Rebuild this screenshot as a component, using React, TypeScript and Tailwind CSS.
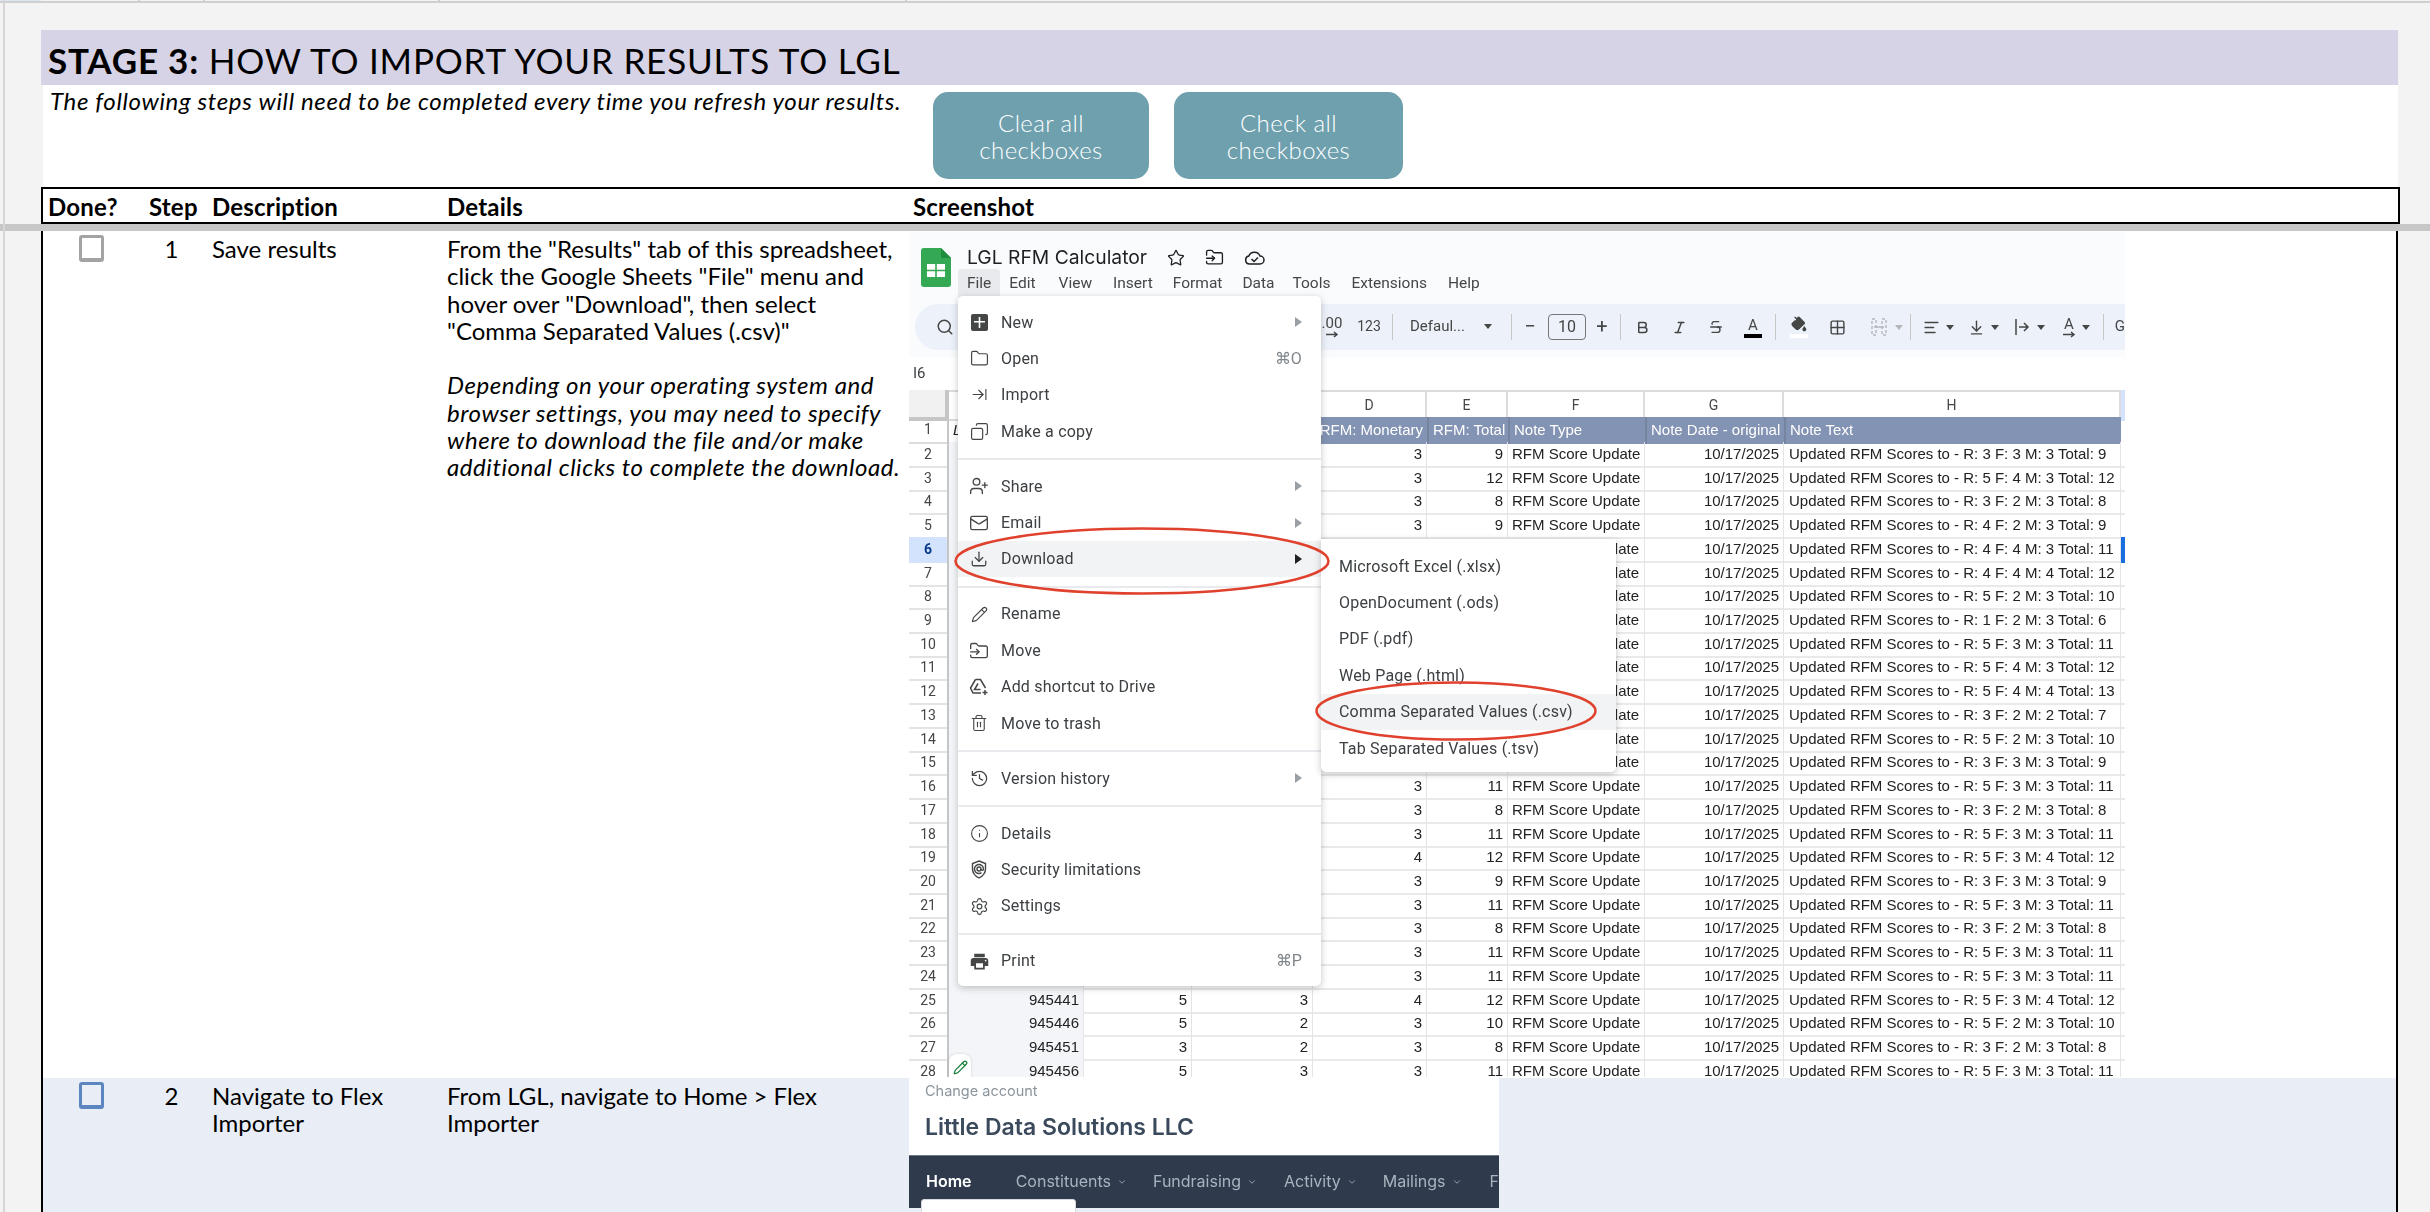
import {
  AlignLeft,
  ArrowDownToLine,
  ArrowRightToLine,
  Bold,
  ChevronDown,
  Copy,
  Download,
  FolderInput,
  Folder,
  Grid2x2,
  History,
  Info,
  Italic,
  Mail,
  PaintBucket,
  Pencil,
  Search,
  Settings,
  Star,
  Strikethrough,
  Trash2,
  UserPlus,
} from 'lucide-react';
import type { ReactNode } from 'react';

const sheetCols = 'grid grid-cols-[40px_135px_108px_121px_114px_81px_137px_139px_337px_4px]';

// R, F, M, Total for rows 2 to 28
const scores = [
  [3, 3, 3, 9], [5, 4, 3, 12], [3, 2, 3, 8], [4, 2, 3, 9], [4, 4, 3, 11], [4, 4, 4, 12],
  [5, 2, 3, 10], [1, 2, 3, 6], [5, 3, 3, 11], [5, 4, 3, 12], [5, 4, 4, 13], [3, 2, 2, 7],
  [5, 2, 3, 10], [3, 3, 3, 9], [5, 3, 3, 11], [3, 2, 3, 8], [5, 3, 3, 11], [5, 3, 4, 12],
  [3, 3, 3, 9], [5, 3, 3, 11], [3, 2, 3, 8], [5, 3, 3, 11], [5, 3, 3, 11], [5, 3, 4, 12],
  [5, 2, 3, 10], [3, 2, 3, 8], [5, 3, 3, 11],
];
const ids: Record<number, string> = { 25: '945441', 26: '945446', 27: '945451', 28: '945456' };

function Caret() {
  return <span className="w-0 h-0 border-x-[4px] border-x-transparent border-t-[5px] border-t-[#444746]" />;
}

function Sep({ className }: { className: string }) {
  return (
    <span className={`flex justify-center ${className}`}>
      <span className="w-[1px] h-[26px] bg-[#c7c7c7]" />
    </span>
  );
}

function SmallArrow() {
  return (
    <svg width="14" height="7" viewBox="0 0 14 7" fill="none" stroke="currentColor" strokeWidth="1.5">
      <path d="M1 3.5h11M9 1l3 2.500L9 6" />
    </svg>
  );
}

function Toolbar() {
  return (
    <div className="ml-[6px] h-[46px] w-[1210px] rounded-l-[23px] bg-[#edf2fa] flex items-center overflow-hidden text-[#444746] [font-family:Roboto,sans-serif]">
      <Search size={18} className="ml-[21px] mr-[362px]" />
      <span className="w-[32px] flex flex-col items-center text-[15px] leading-[15px]">.00<SmallArrow /></span>
      <span className="w-[42px] text-center text-[14px]">123</span>
      <Sep className="w-[6px]" />
      <span className="w-[110px] pl-[14px] flex items-center gap-[19px] text-[15px]">Defaul...<Caret /></span>
      <Sep className="w-[12px]" />
      <span className="w-[24px] text-center text-[20px]">−</span>
      <span className="w-[50px] flex justify-center">
        <span className="w-[38px] h-[26px] border border-[#747775] rounded-[4px] text-center text-[16px] leading-[24px]">10</span>
      </span>
      <span className="w-[20px] text-center text-[20px]">+</span>
      <Sep className="w-[18px]" />
      <span className="w-[26px] flex justify-center"><Bold size={15} strokeWidth={2.4} /></span>
      <span className="w-[48px] flex justify-center"><Italic size={15} strokeWidth={2.4} /></span>
      <span className="w-[24px] flex justify-center"><Strikethrough size={16} /></span>
      <span className="ml-[6px] w-[38px] flex flex-col items-center text-[15px] leading-[17px]">A<span className="w-[18px] h-[4px] bg-black" /></span>
      <Sep className="w-[8px]" />
      <span className="w-[38px] flex flex-col items-center"><PaintBucket size={16} fill="#444746" /><span className="mt-[2px] w-[18px] h-[4px] bg-white" /></span>
      <span className="w-[40px] flex justify-center"><Grid2x2 size={17} /></span>
      <span className="w-[48px] flex items-center justify-end gap-[7px] pr-[3px] text-[#b4b7ba]">
        <svg width="18" height="18" viewBox="0 0 18 18" fill="none" stroke="currentColor" strokeWidth="1.4" strokeDasharray="3 2">
          <path d="M2 1h4v16H2zM12 1h4v16h-4z" />
          <path d="M4 9h10" strokeDasharray="none" />
        </svg>
        <span className="w-0 h-0 border-x-[4px] border-x-transparent border-t-[5px] border-t-[#b4b7ba]" />
      </span>
      <Sep className="w-[10px]" />
      <span className="w-[45px] flex items-center justify-center gap-[6px]"><AlignLeft size={17} /><Caret /></span>
      <span className="w-[46px] flex items-center justify-center gap-[6px]"><ArrowDownToLine size={17} /><Caret /></span>
      <span className="w-[46px] flex items-center justify-center gap-[6px]">
        <svg width="17" height="18" viewBox="0 0 17 18" fill="none" stroke="currentColor" strokeWidth="1.5">
          <path d="M2 1v16M5 9h9M10 5l4 4-4 4" />
        </svg>
        <Caret />
      </span>
      <span className="w-[46px] flex items-center justify-center gap-[6px]">
        <span className="flex flex-col items-center text-[15px] leading-[14px]">A<SmallArrow /></span>
        <Caret />
      </span>
      <Sep className="w-[10px]" />
      <span className="ml-[6px] text-[15px]">G</span>
    </div>
  );
}

function SheetsLogo() {
  return (
    <svg width="30" height="39" viewBox="0 0 30 39">
      <path d="M3 0h17l10 10v26a3 3 0 0 1-3 3H3a3 3 0 0 1-3-3V3a3 3 0 0 1 3-3z" fill="#34a853" />
      <path d="M20 0l10 10H20z" fill="#1e8e3e" />
      <path d="M6 16h18v13H6z" fill="#fff" />
      <path d="M14.2 16h1.6v13h-1.6zM6 21.7h18v1.6H6z" fill="#34a853" />
    </svg>
  );
}

function SheetGrid() {
  return (
    <div className="[font-family:'Liberation_Sans',sans-serif] text-[15px] text-[#222]">
      <div className={`${sheetCols} h-[27px] text-[14px] text-[#444746] [font-family:Roboto,sans-serif]`}>
        <span className="bg-[#f1f1f1] border-r-4 border-b-4 border-[#c4c7c5]" />
        {['', '', '', 'D', 'E', 'F', 'G', 'H'].map((c, i) => (
          <span key={i} className="flex items-center justify-center border-t-2 border-b-2 border-r-2 border-[#dcdcdc]">{c}</span>
        ))}
        <span className="bg-[#d3e3fd]" />
      </div>
      <div className={`${sheetCols} h-[25px] leading-[25px]`}>
        <span className="border-r-2 border-[#c4c7c5] border-b-2 border-b-[#dcdcdc] text-center text-[14px] text-[#444746] [font-family:Roboto,sans-serif]">1</span>
        <span className="pl-[4px] italic border-b-2 border-[#8393b3]">L</span>
        <span className="bg-[#8393b3]" />
        <span className="bg-[#8393b3]" />
        <span className="bg-[#8393b3] text-white text-right pr-[4px] whitespace-nowrap overflow-hidden">RFM: Monetary</span>
        <span className="bg-[#8393b3] text-white pl-[4px] whitespace-nowrap border-l-2 border-[#75859f]">RFM: Total</span>
        <span className="bg-[#8393b3] text-white pl-[4px] whitespace-nowrap border-l-2 border-[#75859f]">Note Type</span>
        <span className="bg-[#8393b3] text-white pl-[4px] whitespace-nowrap border-l-2 border-[#75859f]">Note Date - original</span>
        <span className="bg-[#8393b3] text-white pl-[4px] whitespace-nowrap border-l-2 border-[#75859f]">Note Text</span>
        <span />
      </div>
      {scores.map(([r, f, m, t], i) => {
        const row = i + 2;
        const line = 'border-b-2 border-[#e9e9e9] border-r border-r-[#e4e4e4]';
        const num = `${line} text-right pr-[4px]`;
        // the two menus lie over these cells, so only what shows past them is written
        const underMenu = row < 25;
        const underSubmenu = row >= 6 && row <= 15;
        return (
          <div key={row} className={`${sheetCols} h-[23.73px] leading-[24px]`}>
            <span
              className={
                row === 6
                  ? 'bg-[#d3e3fd] text-center text-[14px] font-bold text-[#0b3a8a] border-r-2 border-[#c4c7c5] [font-family:Roboto,sans-serif]'
                  : 'text-center text-[14px] text-[#444746] border-b-2 border-[#e4e4e4] border-r-2 border-r-[#c4c7c5] [font-family:Roboto,sans-serif]'
              }
            >
              {row}
            </span>
            <span className={`${num} bg-[#f3f5f8]`}>{ids[row]}</span>
            <span className={num}>{!underMenu && r}</span>
            <span className={num}>{!underMenu && f}</span>
            <span className={num}>{!underSubmenu && m}</span>
            <span className={num}>{!underSubmenu && t}</span>
            {underSubmenu ? (
              <span className={`${line} text-right pr-[5px]`}>date</span>
            ) : (
              <span className={`${line} pl-[4px] whitespace-nowrap`}>RFM Score Update</span>
            )}
            <span className={num}>10/17/2025</span>
            <span className={`${line} pl-[5px] whitespace-nowrap`}>{`Updated RFM Scores to - R: ${r} F: ${f} M: ${m} Total: ${t}`}</span>
            <span className={row === 6 ? 'border-2 border-[#1a6fe0]' : 'border-b-2 border-[#e9e9e9]'} />
          </div>
        );
      })}
    </div>
  );
}

function MenuItem({ icon, label, right, arrow, hover }: { icon?: ReactNode; label: string; right?: string; arrow?: 'dim' | 'dark'; hover?: boolean }) {
  return (
    <div className={`h-[36.4px] flex items-center pr-[19px] text-[16px] tracking-[0.2px] text-[#3c4043] ${hover ? 'bg-[#f1f3f4]' : ''}`}>
      <span className="w-[43px] pr-[1px] flex justify-center text-[#444746]">{icon}</span>
      <span className="flex-1 whitespace-nowrap">{label}</span>
      {right && <span className="text-[#80868b]">{right}</span>}
      {arrow && (
        <span className={`w-0 h-0 border-y-[5px] border-y-transparent border-l-[7px] ${arrow === 'dark' ? 'border-l-[#202124]' : 'border-l-[#9aa0a6]'}`} />
      )}
    </div>
  );
}

function MenuLine() {
  return (
    <div className="h-[18.6px] flex items-center">
      <span className="h-[2px] w-full bg-[#e8eaed]" />
    </div>
  );
}

function FileMenu() {
  return (
    <div className="absolute left-[49px] top-[64px] w-[363px] h-[690px] pt-[8px] bg-white rounded-[5px] shadow-[0_2px_7px_rgba(60,64,67,0.3)] [font-family:Roboto,sans-serif]">
      <MenuItem
        label="New"
        arrow="dim"
        icon={
          <svg width="17" height="17" viewBox="0 0 17 17">
            <rect width="17" height="17" rx="2" fill="#444746" />
            <path d="M7.7 3h1.6v11H7.7zM3 7h11v1.6H3z" fill="#fff" />
          </svg>
        }
      />
      <MenuItem label="Open" right="⌘O" icon={<Folder size={19} strokeWidth={1.5} />} />
      <MenuItem label="Import" icon={<ArrowRightToLine size={17} strokeWidth={1.6} />} />
      <MenuItem label="Make a copy" icon={<Copy size={19} strokeWidth={1.5} className="-scale-x-100" />} />
      <MenuLine />
      <MenuItem label="Share" arrow="dim" icon={<UserPlus size={20} strokeWidth={1.6} />} />
      <MenuItem label="Email" arrow="dim" icon={<Mail size={20} strokeWidth={1.6} />} />
      <MenuItem label="Download" arrow="dark" hover icon={<Download size={18} strokeWidth={1.7} />} />
      <MenuLine />
      <MenuItem label="Rename" icon={<Pencil size={17} strokeWidth={1.6} />} />
      <MenuItem label="Move" icon={<FolderInput size={20} strokeWidth={1.6} />} />
      <MenuItem
        label="Add shortcut to Drive"
        icon={
          <svg width="20" height="18" viewBox="0 0 20 18" fill="none" stroke="currentColor" strokeWidth="1.5">
            <path d="M6.5 1.5h5l5 8.5M6.5 1.5L1.5 10l2.5 5h8" />
            <path d="M9 5.5L5.5 11.5h6" />
            <path d="M16 12v5M13.5 14.5h5" />
          </svg>
        }
      />
      <MenuItem label="Move to trash" icon={<Trash2 size={18} strokeWidth={1.5} />} />
      <MenuLine />
      <MenuItem label="Version history" arrow="dim" icon={<History size={19} strokeWidth={1.6} />} />
      <MenuLine />
      <MenuItem label="Details" icon={<Info size={19} strokeWidth={1.4} />} />
      <MenuItem
        label="Security limitations"
        icon={
          <svg width="16" height="19" viewBox="0 0 16 19" fill="none" stroke="currentColor" strokeWidth="1.4">
            <path d="M8 1l6.5 2.5v5.5c0 4-2.6 7-6.5 9-3.9-2-6.5-5-6.5-9V3.500z" />
            <circle cx="8" cy="9" r="2" />
            <path d="M10 9c0 2 2.500 1.500 2.500 0a4.500 4.500 0 1 0-2 3.700" />
          </svg>
        }
      />
      <MenuItem label="Settings" icon={<Settings size={19} strokeWidth={1.5} />} />
      <MenuLine />
      <MenuItem
        label="Print"
        right="⌘P"
        icon={
          <svg width="21" height="21" viewBox="0 0 24 24" fill="currentColor">
            <path d="M19 8H5c-1.660 0-3 1.340-3 3v6h4v4h12v-4h4v-6c0-1.660-1.340-3-3-3zm-3 11H8v-5h8v5zm3-7c-.55 0-1-.45-1-1s.45-1 1-1 1 .45 1 1-.45 1-1 1zm-1-9H6v4h12V3z" />
          </svg>
        }
      />
    </div>
  );
}

function DownloadMenu() {
  const items = ['Microsoft Excel (.xlsx)', 'OpenDocument (.ods)', 'PDF (.pdf)', 'Web Page (.html)', 'Comma Separated Values (.csv)', 'Tab Separated Values (.tsv)'];
  return (
    <div className="absolute left-[412px] top-[307px] w-[295px] h-[233px] pt-[9px] bg-white rounded-b-[5px] shadow-[0_2px_7px_rgba(60,64,67,0.3)] [font-family:Roboto,sans-serif] text-[16px] tracking-[0.2px] text-[#3c4043]">
      {items.map((item) => (
        <div key={item} className={`h-[36.4px] pl-[18px] flex items-center whitespace-nowrap ${item.startsWith('Comma') ? 'bg-[#f1f3f4]' : ''}`}>
          {item}
        </div>
      ))}
    </div>
  );
}

function SheetShot() {
  const menus = ['File', 'Edit', 'View', 'Insert', 'Format', 'Data', 'Tools', 'Extensions', 'Help'];
  const gaps = ['px-[9px]', 'ml-[9px]', 'ml-[23px]', 'ml-[21px]', 'ml-[20px]', 'ml-[20px]', 'ml-[18px]', 'ml-[21px]', 'ml-[21px]'];
  return (
    <div className="relative ml-[5px] mt-[1px] w-[1216px] h-[845px] overflow-hidden bg-white blur-[0.4px]">
      <div className="h-[125px] bg-[#f9fbfd]">
        <div className="flex">
          <div className="ml-[12px] mt-[16px] shrink-0"><SheetsLogo /></div>
          <div className="ml-[7px]">
            <div className="mt-[15px] ml-[9px] h-[21px] flex items-center gap-[20px] text-[#1f1f1f]">
              <span className="[font-family:Inter,sans-serif] text-[19.3px] leading-[21px] whitespace-nowrap">LGL RFM Calculator</span>
              <Star size={18} strokeWidth={1.7} />
              <FolderInput size={19} strokeWidth={1.7} />
              <svg width="21" height="15" viewBox="0 0 21 15" fill="none" stroke="currentColor" strokeWidth="1.5">
                <path d="M5.500 14a4 4 0 0 1-.7-7.900A6 6 0 0 1 16 6a4 4 0 0 1 0 8z" />
                <path d="M7.500 9l2.500 2.500 4-4" />
              </svg>
            </div>
            <div className="flex items-start h-[28px] mt-[1px] text-[15.5px] leading-[28px] text-[#444746] [font-family:Roboto,sans-serif]">
              {menus.map((m, i) => (
                <span key={m} className={`${gaps[i]} ${i === 0 ? 'bg-[#e8eaed] rounded-t-[4px]' : ''}`}>{m}</span>
              ))}
            </div>
          </div>
        </div>
        <div className="mt-[7px]"><Toolbar /></div>
      </div>
      <div className="h-[33px] pl-[4px] text-[15px] leading-[32px] text-[#3c4043] [font-family:Roboto,sans-serif]">I6</div>
      <SheetGrid />
      <FileMenu />
      <DownloadMenu />
      <svg className="absolute left-[45px] top-[295px]" width="377" height="68" viewBox="0 0 377 68" fill="none">
        <ellipse cx="188" cy="34" rx="186.500" ry="32.500" stroke="#e0412d" strokeWidth="2.500" />
      </svg>
      <svg className="absolute left-[406px] top-[449px]" width="282" height="60" viewBox="0 0 282 60" fill="none">
        <ellipse cx="141" cy="30" rx="139.500" ry="28.500" stroke="#e0412d" strokeWidth="2.500" />
      </svg>
      <div className="absolute left-[40px] top-[822px] w-[22px] h-[26px] bg-white rounded-t-[8px] flex items-center justify-center shadow-[0_0_3px_rgba(0,0,0,0.15)]">
        <Pencil size={15} className="text-[#188038]" />
      </div>
    </div>
  );
}

function LglShot() {
  const links = [
    { label: 'Constituents', className: 'ml-[38px]' },
    { label: 'Fundraising', className: 'ml-[26px]' },
    { label: 'Activity', className: 'ml-[27px]' },
    { label: 'Mailings', className: 'ml-[26px]' },
    { label: 'F', className: 'ml-[28px]' },
  ];
  return (
    <div className="relative ml-[5px] w-[590px] h-[134px] overflow-hidden blur-[0.3px] [font-family:Inter,sans-serif]">
      <div className="h-[77px] bg-white pl-[16px] pt-[3px]">
        <p className="text-[14.500px] leading-[20px] text-[#8c949c]">Change account</p>
        <p className="mt-[12px] text-[23px] leading-[28px] font-semibold text-[#3a4a5c]">Little Data Solutions LLC</p>
      </div>
      <div className="h-[53px] bg-[#2f3b4c] border-t border-[#6d7683] pl-[17px] flex items-center whitespace-nowrap overflow-hidden text-[16px] text-[#a9b3bf]">
        <span className="font-semibold text-white">Home</span>
        <ChevronDown size={10} className="ml-[5px] text-white" />
        {links.map((l) => (
          <span key={l.label} className={`flex items-center ${l.className}`}>
            {l.label}
            {l.label !== 'F' && <ChevronDown size={10} className="ml-[6px]" />}
          </span>
        ))}
      </div>
      <div className="absolute left-[12px] top-[121px] w-[155px] h-[20px] bg-white rounded-t-[3px] border border-[#d5d9de]" />
    </div>
  );
}

function Checkbox({ className }: { className: string }) {
  return <span className={`block w-[25px] h-[27px] bg-transparent border-[3px] border-b-[4px] rounded-[3px] ${className}`} />;
}

const tableCols = 'grid grid-cols-[99px_64px_235px_463px_1fr]';

export default function App() {
  return (
    <div className="relative w-[2430px] h-[1212px] overflow-hidden bg-[#f3f3f3] text-black [font-family:Lato,sans-serif]">
      {/* the sheet's own column and row rulers */}
      <div className="flex h-[3px] border-b-2 border-[#cfcfcf]">
        <span className="w-[41px] bg-[#dfe6f3]" />
        <span className="w-[99px] border-r-2 border-[#cfcfcf]" />
        <span className="w-[65px] border-r-2 border-[#cfcfcf]" />
        <span className="w-[235px] border-r-2 border-[#cfcfcf]" />
        <span className="w-[467px] border-r-2 border-[#cfcfcf]" />
      </div>
      <div className="absolute left-[3px] top-0 bottom-0 w-[1.500px] bg-[#d6d6d6]" />

      {/* frozen rows */}
      <div className="pl-[41px] pr-[32px] pt-[27px]">
        <h1 className="h-[55px] bg-[#d7d3e6] pl-[7px] text-[35px] tracking-[0.8px] leading-[60px] whitespace-nowrap">
          <span className="font-bold">STAGE 3:</span> HOW TO IMPORT YOUR RESULTS TO LGL
        </h1>
        <div className="ml-[2px] h-[102px] bg-white flex items-start pl-[7px]">
          <p className="w-[883px] mt-[2px] text-[24px] tracking-[0.65px] leading-[27px] italic whitespace-nowrap">
            The following steps will need to be completed every time you refresh your results.
          </p>
          <button className="mt-[7px] w-[216px] h-[87px] rounded-[15px] bg-[#6ea0ae] text-white font-light text-[24px] tracking-[0.4px] leading-[27px]">
            Clear all<br />checkboxes
          </button>
          <button className="ml-[25px] mt-[7px] w-[229px] h-[87px] rounded-[15px] bg-[#6ea0ae] text-white font-light text-[24px] tracking-[0.4px] leading-[27px]">
            Check all<br />checkboxes
          </button>
        </div>
        <div className={`${tableCols} -mr-[2px] h-[37px] border-2 border-black bg-white font-bold text-[24px] tracking-[0.2px] leading-[36px]`}>
          <span className="pl-[5px]">Done?</span>
          <span className="pl-[7px]">Step</span>
          <span className="pl-[6px]">Description</span>
          <span className="pl-[6px]">Details</span>
          <span className="pl-[9px]">Screenshot</span>
        </div>
      </div>

      <div className="h-[7px] bg-[#c7c7c7]" />

      {/* steps */}
      <div className="ml-[41px] w-[2357px] border-x-2 border-black text-[24px] leading-[27.300px]">
        <div className={`${tableCols} h-[847px] bg-white`}>
          <div className="pt-[4px] pl-[36px]"><Checkbox className="border-[#a3a3a3]" /></div>
          <div className="pt-[4px] text-center pr-[5px]">1</div>
          <div className="pt-[4px] pl-[6px]">Save results</div>
          <div className="pt-[4px] pl-[6px] whitespace-nowrap">
            <p>From the "Results" tab of this spreadsheet,<br />click the Google Sheets "File" menu and<br />hover over "Download", then select<br />"Comma Separated Values (.csv)"</p>
            <p className="mt-[27.300px] italic tracking-[0.55px]">Depending on your operating system and<br />browser settings, you may need to specify<br />where to download the file and/or make<br />additional clicks to complete the download.</p>
          </div>
          <SheetShot />
        </div>
        <div className={`${tableCols} h-[134px] bg-[#e9eef6]`}>
          <div className="pt-[4px] pl-[36px]"><Checkbox className="border-[#5b86c0]" /></div>
          <div className="pt-[4px] text-center pr-[5px]">2</div>
          <div className="pt-[4px] pl-[6px]">Navigate to Flex<br />Importer</div>
          <div className="pt-[4px] pl-[6px]">From LGL, navigate to Home &gt; Flex<br />Importer</div>
          <LglShot />
        </div>
      </div>
    </div>
  );
}
